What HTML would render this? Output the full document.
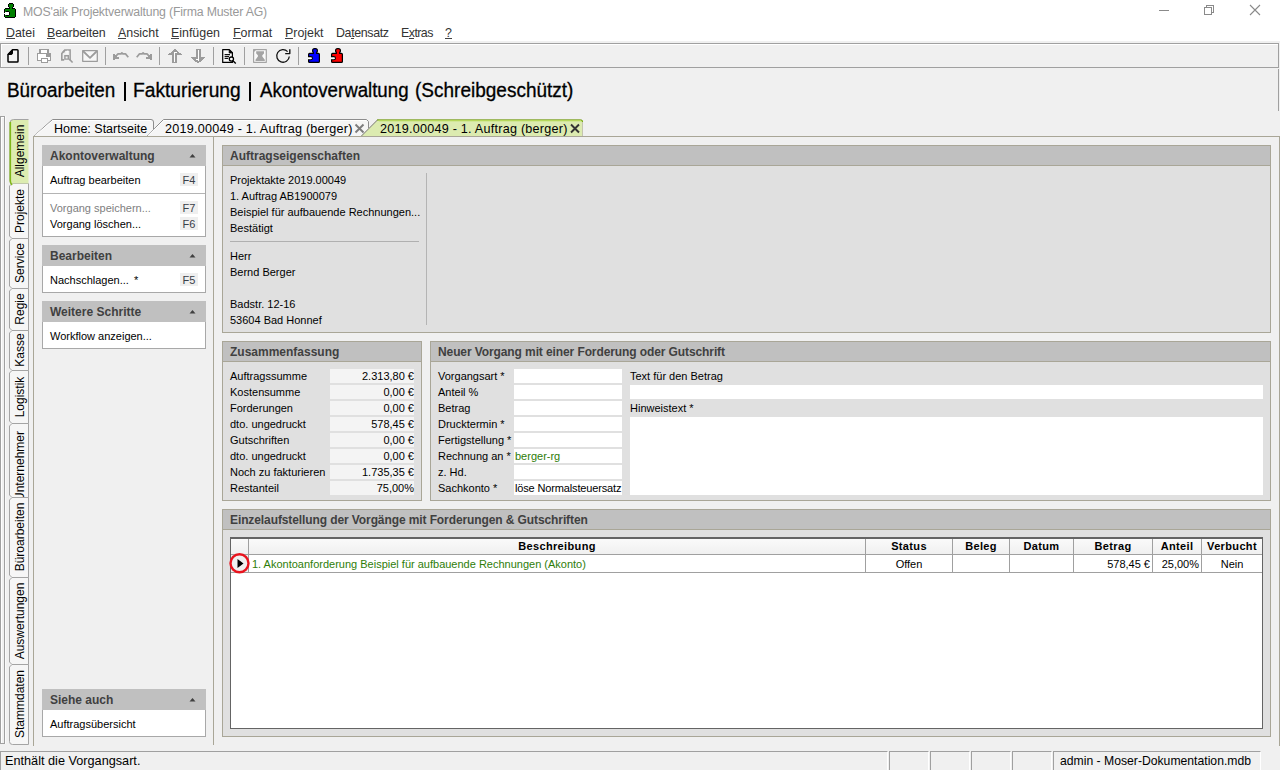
<!DOCTYPE html>
<html><head><meta charset="utf-8">
<style>
*{margin:0;padding:0;box-sizing:border-box}
html,body{width:1280px;height:770px;overflow:hidden;background:#f0f0f0;font-family:"Liberation Sans",sans-serif;color:#000}
.a{position:absolute}
.t{position:absolute;white-space:nowrap;line-height:16px;font-size:11px}
.hl{position:absolute;height:1px}
.vl{position:absolute;width:1px}
u{text-decoration:none;border-bottom:1px solid #444;display:inline-block;line-height:10px}
</style></head><body>
<!-- title + menu white area -->
<div class="a" style="left:0;top:0;width:1280px;height:41px;background:#fff"></div>
<svg class="a" style="left:0;top:0" width="20" height="20" shape-rendering="crispEdges"><rect x="9" y="3" width="4" height="1" fill="#000"/><rect x="8" y="4" width="1" height="1" fill="#000"/><rect x="9" y="4" width="4" height="1" fill="#008000"/><rect x="13" y="4" width="1" height="1" fill="#000"/><rect x="8" y="5" width="1" height="1" fill="#000"/><rect x="9" y="5" width="4" height="1" fill="#008000"/><rect x="13" y="5" width="1" height="1" fill="#000"/><rect x="8" y="6" width="1" height="1" fill="#000"/><rect x="9" y="6" width="4" height="1" fill="#008000"/><rect x="13" y="6" width="1" height="1" fill="#000"/><rect x="9" y="7" width="1" height="1" fill="#000"/><rect x="10" y="7" width="2" height="1" fill="#008000"/><rect x="12" y="7" width="1" height="1" fill="#000"/><rect x="5" y="8" width="5" height="1" fill="#000"/><rect x="10" y="8" width="2" height="1" fill="#008000"/><rect x="12" y="8" width="3" height="1" fill="#000"/><rect x="4" y="9" width="1" height="1" fill="#000"/><rect x="5" y="9" width="10" height="1" fill="#008000"/><rect x="15" y="9" width="1" height="1" fill="#000"/><rect x="4" y="10" width="1" height="1" fill="#000"/><rect x="5" y="10" width="10" height="1" fill="#008000"/><rect x="15" y="10" width="1" height="1" fill="#000"/><rect x="4" y="11" width="1" height="1" fill="#000"/><rect x="5" y="11" width="1" height="1" fill="#008000"/><rect x="6" y="11" width="3" height="1" fill="#000"/><rect x="9" y="11" width="6" height="1" fill="#008000"/><rect x="15" y="11" width="1" height="1" fill="#000"/><rect x="4" y="12" width="1" height="1" fill="#000"/><rect x="5" y="12" width="4" height="1" fill="#fff"/><rect x="9" y="12" width="1" height="1" fill="#000"/><rect x="10" y="12" width="5" height="1" fill="#008000"/><rect x="15" y="12" width="1" height="1" fill="#000"/><rect x="4" y="13" width="5" height="1" fill="#fff"/><rect x="9" y="13" width="1" height="1" fill="#000"/><rect x="10" y="13" width="5" height="1" fill="#008000"/><rect x="15" y="13" width="1" height="1" fill="#000"/><rect x="4" y="14" width="1" height="1" fill="#000"/><rect x="5" y="14" width="4" height="1" fill="#fff"/><rect x="9" y="14" width="1" height="1" fill="#000"/><rect x="10" y="14" width="5" height="1" fill="#008000"/><rect x="15" y="14" width="1" height="1" fill="#000"/><rect x="4" y="15" width="1" height="1" fill="#000"/><rect x="5" y="15" width="1" height="1" fill="#008000"/><rect x="6" y="15" width="3" height="1" fill="#000"/><rect x="9" y="15" width="6" height="1" fill="#008000"/><rect x="15" y="15" width="1" height="1" fill="#000"/><rect x="4" y="16" width="1" height="1" fill="#000"/><rect x="5" y="16" width="10" height="1" fill="#008000"/><rect x="15" y="16" width="1" height="1" fill="#000"/><rect x="5" y="17" width="10" height="1" fill="#000"/></svg>
<div class="t" style="left:23px;top:4px;font-size:12.3px;color:#999;line-height:16px;letter-spacing:-0.18px">MOS'aik Projektverwaltung (Firma Muster AG)</div>
<div class="hl" style="left:1159px;top:10px;width:10px;background:#8a8a8a"></div>
<div class="a" style="left:1206px;top:5px;width:8px;height:8px;border:1px solid #8a8a8a"></div>
<div class="a" style="left:1204px;top:7px;width:8px;height:8px;border:1px solid #8a8a8a;background:#fff"></div>
<svg class="a" style="left:1249px;top:4px" width="12" height="12"><path d="M1 1L11 11M11 1L1 11" stroke="#8a8a8a" stroke-width="1.1"/></svg>
<!-- menu -->
<div class="t" style="left:6px;top:25px;font-size:12.4px;line-height:16px;color:#333">
<span class="a" style="left:0"><u>D</u>atei</span>
<span class="a" style="left:41px;letter-spacing:-0.15px"><u>B</u>earbeiten</span>
<span class="a" style="left:112px"><u>A</u>nsicht</span>
<span class="a" style="left:165px"><u>E</u>infügen</span>
<span class="a" style="left:227px"><u>F</u>ormat</span>
<span class="a" style="left:279px"><u>P</u>rojekt</span>
<span class="a" style="left:330px;letter-spacing:-0.35px">Da<u>t</u>ensatz</span>
<span class="a" style="left:395px;letter-spacing:-0.55px">E<u>x</u>tras</span>
<span class="a" style="left:439px"><u>?</u></span>
</div>
<!-- toolbar -->
<div class="a" style="left:0;top:43px;width:1279px;height:25px;border:1px solid #a0a0a0;background:#f0f0f0;box-shadow:inset 1px 1px 0 #fff"></div>
<svg class="a" style="left:0;top:43px" width="360" height="25" viewBox="0 43 360 25">
<g fill="none" stroke-linejoin="round">
<!-- new doc -->
<path d="M8 54.5L12.5 49.8H17.2Q18 49.8 18 50.6V61.2Q18 62 17.2 62H8.8Q8 62 8 61.2Z" stroke="#000" stroke-width="1.5" fill="#f2f2f2"/>
<path d="M8 54.5L12.5 49.8V53Q12.5 54.5 11 54.5Z" fill="#000" stroke="#000" stroke-width="1"/>
<!-- separators -->
<g stroke="#a0a0a0" stroke-width="1"><path d="M28.5 47V65M105.5 47V65M159.5 47V65M213.5 47V65M244.5 47V65M298.5 47V65"/></g>
<!-- printer -->
<g shape-rendering="crispEdges">
<rect x="39" y="49" width="10" height="4" fill="#9c9c9c"/><rect x="41" y="50" width="6" height="3" fill="#fff"/>
<rect x="37" y="53" width="14" height="8" fill="#9c9c9c"/><rect x="38" y="54" width="12" height="6" fill="#fff"/>
<rect x="46" y="54" width="4" height="3" fill="#9c9c9c"/>
<rect x="41" y="58" width="7" height="5" fill="#9c9c9c"/><rect x="42" y="59" width="5" height="3" fill="#fff"/>
</g>
<!-- preview -->
<g fill="#9c9c9c">
<path d="M61 53.2L64.6 49.2H70.9V60.4H69.4V50.7H65.5L62.6 53.8V59H64.2V60.8H61Z"/>
<path d="M64.2 55.1H69V59.8H64.2ZM65.6 56.5V58.4H67.6V56.5Z" fill-rule="evenodd"/>
<path d="M68.6 59.6L69.8 58.6L73.2 62L72 63.1Z"/>
<path d="M64.6 49.2V52.6H61.6Z"/>
</g>
<path d="M67 51.2V54.2M67 51.2H68.3" stroke="#fff" stroke-width="1"/>
<!-- mail -->
<g stroke="#9c9c9c" stroke-width="1.3" fill="#f7f7f7">
<path d="M82.7 50.6H97.3V61.3H82.7Z"/>
<path d="M83 51L90 57.8L97 51" fill="none" stroke-width="1.8"/>
</g>
<!-- undo -->
<g id="undo">
<path d="M116.6 55.4L118 53.9H120.9L121.9 52.8L122.9 53.9H125.5L128.3 57.2" stroke="#9c9c9c" stroke-width="1.7" fill="none"/>
<path d="M113 54H115V55H117V57H119V59H115V60H113Z" fill="#9c9c9c"/>
</g>
<g transform="translate(265 0) scale(-1 1)">
<path d="M116.6 55.4L118 53.9H120.9L121.9 52.8L122.9 53.9H125.5L128.3 57.2" stroke="#9c9c9c" stroke-width="1.7" fill="none"/>
<path d="M113 54H115V55H117V57H119V59H115V60H113Z" fill="#9c9c9c"/>
</g>
<!-- up / down -->
<g shape-rendering="crispEdges"><rect x="174" y="49" width="2" height="1" fill="#9c9c9c"/><rect x="173" y="50" width="4" height="1" fill="#9c9c9c"/><rect x="172" y="51" width="6" height="1" fill="#9c9c9c"/><rect x="171" y="52" width="8" height="1" fill="#9c9c9c"/><rect x="169" y="53" width="12" height="1" fill="#9c9c9c"/><rect x="168" y="54" width="14" height="1" fill="#9c9c9c"/><rect x="172" y="55" width="5" height="8" fill="#9c9c9c"/><rect x="174" y="52" width="1" height="10" fill="#fff"/><rect x="174" y="52" width="3" height="1" fill="#fff"/><rect x="196" y="49" width="5" height="8" fill="#9c9c9c"/><rect x="191" y="57" width="14" height="1" fill="#9c9c9c"/><rect x="192" y="58" width="12" height="1" fill="#9c9c9c"/><rect x="193" y="59" width="10" height="1" fill="#9c9c9c"/><rect x="194" y="60" width="8" height="1" fill="#9c9c9c"/><rect x="195" y="61" width="6" height="1" fill="#9c9c9c"/><rect x="197" y="62" width="2" height="1" fill="#9c9c9c"/><rect x="198" y="50" width="1" height="11" fill="#fff"/><rect x="196" y="59" width="3" height="1" fill="#fff"/></g>
<!-- doc search -->
<path d="M222.7 49.6H229.3L232.4 52.7V62.4H222.7Z" stroke="#000" stroke-width="1.2" fill="#f8f8f8"/>
<path d="M229.2 49.8V53H232.4Z" fill="#000" stroke="#000" stroke-width="0.8"/>
<path d="M224.6 54.6H230M224.6 56.6H229M224.6 58.5H228.2" stroke="#111" stroke-width="1.2" fill="none"/>
<circle cx="231.4" cy="59.1" r="2.1" stroke="#000" stroke-width="1.3" fill="#fff"/>
<path d="M232.9 60.8L235.8 63.4" stroke="#000" stroke-width="1.4"/>
<!-- xbox -->
<path d="M253.6 49.6H266.3V62.3H253.6Z" stroke="#a4a4a4" stroke-width="1.2" fill="#fafafa"/>
<path d="M253.6 51.5L255.5 49.6" stroke="#a4a4a4" stroke-width="1.2"/>
<path d="M256.2 51.3H264V53.4L262.3 55.2V56.6L264.8 59.8V61H255.5V59.8L257.9 56.6V55.2L256.2 53.4Z" fill="#a4a4a4"/>
<!-- refresh -->
<path d="M289.3 56.5A6.3 6.3 0 1 1 287.6 51.6" stroke="#111" stroke-width="1.3" fill="none"/>
<path d="M289.8 49.2V53.6H285.2" stroke="#111" stroke-width="1.4" fill="none"/>
<!-- puzzles -->
<g transform="translate(0 0)">
<rect x="312.6" y="48.6" width="4.8" height="4.2" rx="2" fill="#0000ff" stroke="#000" stroke-width="1.2"/>
<rect x="308.6" y="53.4" width="10.8" height="9" rx="1" fill="#0000ff" stroke="#000" stroke-width="1.2"/>
<rect x="313.9" y="51.6" width="2.2" height="2.4" fill="#0000ff"/>
<rect x="307.9" y="57.1" width="3" height="2.2" fill="#fff"/><path d="M308 56.6H310.9A1.6 1.6 0 1 1 310.9 59.8H308" fill="#fff" stroke="#000" stroke-width="1.1"/>

</g>
<g transform="translate(23 0)">
<rect x="312.6" y="48.6" width="4.8" height="4.2" rx="2" fill="#ff0000" stroke="#000" stroke-width="1.2"/>
<rect x="308.6" y="53.4" width="10.8" height="9" rx="1" fill="#ff0000" stroke="#000" stroke-width="1.2"/>
<rect x="313.9" y="51.6" width="2.2" height="2.4" fill="#ff0000"/>
<rect x="307.9" y="57.1" width="3" height="2.2" fill="#fff"/><path d="M308 56.6H310.9A1.6 1.6 0 1 1 310.9 59.8H308" fill="#fff" stroke="#000" stroke-width="1.1"/>

</g>
</g>
</svg>
<!-- heading -->
<div class="t" style="left:0;top:79px;font-size:18.8px;line-height:24px;-webkit-text-stroke:0.3px #000;transform:scaleY(1.075);transform-origin:0 18px">
<span class="a" id="h1" style="left:7px;font-size:18.9px">Büroarbeiten</span><span class="a" id="h2" style="left:133px;font-size:19.2px">Fakturierung</span><span class="a" id="h3" style="left:260px;font-size:18.7px">Akontoverwaltung</span><span class="a" id="h4" style="left:415px;font-size:19px">(Schreibgeschützt)</span></div>
<div class="a" style="left:124px;top:82px;width:2px;height:19px;background:#000"></div><div class="a" style="left:249px;top:82px;width:2px;height:19px;background:#000"></div>
<div class="vl" style="left:1278px;top:69px;height:42px;background:#a0a0a0"></div>

<!-- CONTENT -->
<div id="content"></div>
<div class="a" style="left:222px;top:145px;width:1049px;height:188px;border:1px solid #a9a697;background:#e0e0e0"></div>
<div class="a" style="left:223px;top:146px;width:1047px;height:20px;background:#c0c0c0;border-bottom:1px solid #a9a697"></div>
<div class="t" style="left:230px;top:148px;font-size:12px;font-weight:bold;color:#404040;line-height:16px">Auftragseigenschaften</div>
<div class="a" style="left:222px;top:341px;width:200px;height:160px;border:1px solid #a9a697;background:#e0e0e0"></div>
<div class="a" style="left:223px;top:342px;width:198px;height:20px;background:#c0c0c0;border-bottom:1px solid #a9a697"></div>
<div class="t" style="left:230px;top:344px;font-size:12px;font-weight:bold;color:#404040;line-height:16px">Zusammenfassung</div>
<div class="a" style="left:430px;top:341px;width:841px;height:160px;border:1px solid #a9a697;background:#e0e0e0"></div>
<div class="a" style="left:431px;top:342px;width:839px;height:20px;background:#c0c0c0;border-bottom:1px solid #a9a697"></div>
<div class="t" style="left:438px;top:344px;font-size:12px;font-weight:bold;color:#404040;line-height:16px;letter-spacing:-0.1px">Neuer Vorgang mit einer Forderung oder Gutschrift</div>
<div class="a" style="left:222px;top:509px;width:1049px;height:228px;border:1px solid #a9a697;background:#e0e0e0"></div>
<div class="a" style="left:223px;top:510px;width:1047px;height:20px;background:#c0c0c0;border-bottom:1px solid #a9a697"></div>
<div class="t" style="left:230px;top:512px;font-size:12px;font-weight:bold;color:#404040;line-height:16px;letter-spacing:-0.1px">Einzelaufstellung der Vorgänge mit Forderungen &amp; Gutschriften</div>
<div class="t" style="left:230px;top:172px;">Projektakte 2019.00049</div>
<div class="t" style="left:230px;top:188px;">1. Auftrag AB1900079</div>
<div class="t" style="left:230px;top:204px;">Beispiel für aufbauende Rechnungen...</div>
<div class="t" style="left:230px;top:220px;">Bestätigt</div>
<div class="t" style="left:230px;top:248px;">Herr</div>
<div class="t" style="left:230px;top:264px;">Bernd Berger</div>
<div class="t" style="left:230px;top:296px;">Badstr. 12-16</div>
<div class="t" style="left:230px;top:312px;">53604 Bad Honnef</div>
<div class="hl" style="left:230px;top:241px;width:189px;background:#b0b0b0"></div>
<div class="vl" style="left:426px;top:173px;height:152px;background:#b4b4b4"></div>
<div class="t" style="left:230px;top:368px;">Auftragssumme</div>
<div class="a" style="left:330px;top:369px;width:84px;height:14px;background:#f4f4f4"></div>
<div class="t" style="left:330px;top:368px;width:84px;text-align:right">2.313,80 €</div>
<div class="t" style="left:230px;top:384px;">Kostensumme</div>
<div class="a" style="left:330px;top:385px;width:84px;height:14px;background:#f4f4f4"></div>
<div class="t" style="left:330px;top:384px;width:84px;text-align:right">0,00 €</div>
<div class="t" style="left:230px;top:400px;">Forderungen</div>
<div class="a" style="left:330px;top:401px;width:84px;height:14px;background:#f4f4f4"></div>
<div class="t" style="left:330px;top:400px;width:84px;text-align:right">0,00 €</div>
<div class="t" style="left:230px;top:416px;">dto. ungedruckt</div>
<div class="a" style="left:330px;top:417px;width:84px;height:14px;background:#f4f4f4"></div>
<div class="t" style="left:330px;top:416px;width:84px;text-align:right">578,45 €</div>
<div class="t" style="left:230px;top:432px;">Gutschriften</div>
<div class="a" style="left:330px;top:433px;width:84px;height:14px;background:#f4f4f4"></div>
<div class="t" style="left:330px;top:432px;width:84px;text-align:right">0,00 €</div>
<div class="t" style="left:230px;top:448px;">dto. ungedruckt</div>
<div class="a" style="left:330px;top:449px;width:84px;height:14px;background:#f4f4f4"></div>
<div class="t" style="left:330px;top:448px;width:84px;text-align:right">0,00 €</div>
<div class="t" style="left:230px;top:464px;">Noch zu fakturieren</div>
<div class="a" style="left:330px;top:465px;width:84px;height:14px;background:#f4f4f4"></div>
<div class="t" style="left:330px;top:464px;width:84px;text-align:right">1.735,35 €</div>
<div class="t" style="left:230px;top:480px;">Restanteil</div>
<div class="a" style="left:330px;top:481px;width:84px;height:14px;background:#f4f4f4"></div>
<div class="t" style="left:330px;top:480px;width:84px;text-align:right">75,00%</div>
<div class="t" style="left:438px;top:368px;">Vorgangsart *</div>
<div class="a" style="left:514px;top:369px;width:108px;height:14px;background:#fff"></div>
<div class="t" style="left:438px;top:384px;">Anteil %</div>
<div class="a" style="left:514px;top:385px;width:108px;height:14px;background:#fff"></div>
<div class="t" style="left:438px;top:400px;">Betrag</div>
<div class="a" style="left:514px;top:401px;width:108px;height:14px;background:#fff"></div>
<div class="t" style="left:438px;top:416px;">Drucktermin *</div>
<div class="a" style="left:514px;top:417px;width:108px;height:14px;background:#fff"></div>
<div class="t" style="left:438px;top:432px;">Fertigstellung *</div>
<div class="a" style="left:514px;top:433px;width:108px;height:14px;background:#fff"></div>
<div class="t" style="left:438px;top:448px;">Rechnung an *</div>
<div class="a" style="left:514px;top:449px;width:108px;height:14px;background:#fff"></div>
<div class="t" style="left:438px;top:464px;">z. Hd.</div>
<div class="a" style="left:514px;top:465px;width:108px;height:14px;background:#fff"></div>
<div class="t" style="left:438px;top:480px;">Sachkonto *</div>
<div class="a" style="left:514px;top:481px;width:108px;height:14px;background:#fff"></div>
<div class="t" style="left:515px;top:448px;color:#2e7d08">berger-rg</div>
<div class="t" style="left:515px;top:480px;letter-spacing:-0.15px">löse Normalsteuersatz</div>
<div class="t" style="left:630px;top:368px;">Text für den Betrag</div>
<div class="a" style="left:630px;top:385px;width:633px;height:14px;background:#fff"></div>
<div class="t" style="left:630px;top:400px;">Hinweistext *</div>
<div class="a" style="left:630px;top:417px;width:633px;height:78px;background:#fff"></div>
<div class="a" style="left:230px;top:537px;width:1033px;height:192px;background:#fff;border:1px solid #646464;border-top:2px solid #646464"></div>
<div class="a" style="left:231px;top:539px;width:1031px;height:15px;background:linear-gradient(#fafafa,#f0f0f0)"></div>
<div class="hl" style="left:231px;top:554px;width:1031px;background:#a0a0a0"></div>
<div class="hl" style="left:231px;top:572px;width:1031px;background:#a0a0a0"></div>
<div class="a" style="left:231px;top:555px;width:17px;height:17px;background:#f0f0f0"></div>
<div class="vl" style="left:248px;top:539px;height:33px;background:#a0a0a0"></div>
<div class="vl" style="left:865px;top:539px;height:33px;background:#a0a0a0"></div>
<div class="vl" style="left:952px;top:539px;height:33px;background:#a0a0a0"></div>
<div class="vl" style="left:1009px;top:539px;height:33px;background:#a0a0a0"></div>
<div class="vl" style="left:1073px;top:539px;height:33px;background:#a0a0a0"></div>
<div class="vl" style="left:1152px;top:539px;height:33px;background:#a0a0a0"></div>
<div class="vl" style="left:1201px;top:539px;height:33px;background:#a0a0a0"></div>
<div class="t" style="left:249px;top:538px;width:616px;text-align:center;font-weight:bold;letter-spacing:0.35px">Beschreibung</div>
<div class="t" style="left:866px;top:538px;width:86px;text-align:center;font-weight:bold;letter-spacing:0.35px">Status</div>
<div class="t" style="left:953px;top:538px;width:56px;text-align:center;font-weight:bold;letter-spacing:0.35px">Beleg</div>
<div class="t" style="left:1010px;top:538px;width:63px;text-align:center;font-weight:bold;letter-spacing:0.35px">Datum</div>
<div class="t" style="left:1074px;top:538px;width:78px;text-align:center;font-weight:bold;letter-spacing:0.35px">Betrag</div>
<div class="t" style="left:1153px;top:538px;width:48px;text-align:center;font-weight:bold;letter-spacing:0.35px">Anteil</div>
<div class="t" style="left:1202px;top:538px;width:60px;text-align:center;font-weight:bold;letter-spacing:0.35px">Verbucht</div>
<div class="t" style="left:252px;top:556px;color:#2e7d08">1. Akontoanforderung Beispiel für aufbauende Rechnungen (Akonto)</div>
<div class="t" style="left:866px;top:556px;width:86px;text-align:center">Offen</div>
<div class="t" style="left:1074px;top:556px;width:76px;text-align:right">578,45 €</div>
<div class="t" style="left:1153px;top:556px;width:46px;text-align:right">25,00%</div>
<div class="t" style="left:1202px;top:556px;width:60px;text-align:center">Nein</div>
<svg class="a" style="left:228px;top:552px" width="24" height="22"><path d="M9.5 7V16L15.5 11.5Z" fill="#000"/><circle cx="11.5" cy="11.2" r="9" fill="none" stroke="#e8141e" stroke-width="2.4"/></svg>
<svg class="a" style="left:30px;top:116px" width="560" height="22" viewBox="30 116 560 22">
<path d="M33.5 136.5L52.5 119.5H151Q153.5 119.5 153.5 122V136.5" fill="#f5f5f5" stroke="#8c8c8c" stroke-width="1"/>
<path d="M34.5 136L52.8 120.5H151" fill="none" stroke="#fff" stroke-width="1"/>
<path d="M146.5 136.5L163.5 119.5H366.5L368.5 121.5V136.5" fill="#f5f5f5" stroke="#8c8c8c" stroke-width="1"/>
<path d="M147.5 136L163.8 120.5H366" fill="none" stroke="#fff" stroke-width="1"/>
<path d="M360.5 136.5L377.5 119.5H580.5Q582.5 119.5 582.5 121.5V136.5" fill="#dcebb0" stroke="#c4c4b0" stroke-width="1"/>
<path d="M361 136.5L378 119.5" fill="none" stroke="#8c8c8c" stroke-width="1"/><path d="M377 120H580.5Q582.5 120 582.5 122" fill="none" stroke="#7aae10" stroke-width="1.2"/>
<path d="M379 120.8H581" stroke="#b9dc5a" stroke-width="1"/>
<path d="M33 136.5H1279" stroke="#a9a697" stroke-width="1"/>
<path d="M355.5 124.5L363.5 132.5M363.5 124.5L355.5 132.5" stroke="#7c7c7c" stroke-width="1.9"/>
<path d="M571 124.5L579 132.5M579 124.5L571 132.5" stroke="#333" stroke-width="1.9"/>
</svg>
<div class="t" style="left:54px;top:121px;font-size:12.5px;line-height:16px">Home: Startseite</div>
<div class="t" style="left:165px;top:121px;font-size:12.6px;letter-spacing:0.24px;line-height:16px">2019.00049 - 1. Auftrag (berger)</div>
<div class="t" style="left:380px;top:121px;font-size:12.6px;letter-spacing:0.24px;line-height:16px">2019.00049 - 1. Auftrag (berger)</div>
<div class="vl" style="left:213px;top:137px;height:608px;background:#a9a697"></div>
<div class="a" style="left:42px;top:145px;width:164px;height:21px;background:#c0c0c0"></div>
<div class="t" style="left:50px;top:148px;font-size:12px;font-weight:bold;color:#404040;line-height:16px">Akontoverwaltung</div>
<svg class="a" style="left:189px;top:153px" width="7" height="5"><path d="M0.5 4.5L3.5 1L6.5 4.5Z" fill="#404040"/></svg>
<div class="a" style="left:42px;top:166px;width:164px;height:71px;background:#fff;border:1px solid #a8a8a8;border-top:none"></div>
<div class="a" style="left:42px;top:245px;width:164px;height:21px;background:#c0c0c0"></div>
<div class="t" style="left:50px;top:248px;font-size:12px;font-weight:bold;color:#404040;line-height:16px">Bearbeiten</div>
<svg class="a" style="left:189px;top:253px" width="7" height="5"><path d="M0.5 4.5L3.5 1L6.5 4.5Z" fill="#404040"/></svg>
<div class="a" style="left:42px;top:266px;width:164px;height:27px;background:#fff;border:1px solid #a8a8a8;border-top:none"></div>
<div class="a" style="left:42px;top:301px;width:164px;height:21px;background:#c0c0c0"></div>
<div class="t" style="left:50px;top:304px;font-size:12px;font-weight:bold;color:#404040;line-height:16px">Weitere Schritte</div>
<svg class="a" style="left:189px;top:309px" width="7" height="5"><path d="M0.5 4.5L3.5 1L6.5 4.5Z" fill="#404040"/></svg>
<div class="a" style="left:42px;top:322px;width:164px;height:27px;background:#fff;border:1px solid #a8a8a8;border-top:none"></div>
<div class="a" style="left:42px;top:689px;width:164px;height:21px;background:#c0c0c0"></div>
<div class="t" style="left:50px;top:692px;font-size:12px;font-weight:bold;color:#404040;line-height:16px">Siehe auch</div>
<svg class="a" style="left:189px;top:697px" width="7" height="5"><path d="M0.5 4.5L3.5 1L6.5 4.5Z" fill="#404040"/></svg>
<div class="a" style="left:42px;top:710px;width:164px;height:27px;background:#fff;border:1px solid #a8a8a8;border-top:none"></div>
<div class="hl" style="left:43px;top:193px;width:162px;background:#b4b4b4"></div>
<div class="t" style="left:50px;top:172px;color:#000">Auftrag bearbeiten</div>
<div class="a" style="left:180px;top:173px;width:18px;height:13px;background:#efefef"></div>
<div class="t" style="left:181px;top:172px;width:16px;text-align:center;color:#3a4048">F4</div>
<div class="t" style="left:50px;top:200px;color:#808080">Vorgang speichern...</div>
<div class="a" style="left:180px;top:201px;width:18px;height:13px;background:#efefef"></div>
<div class="t" style="left:181px;top:200px;width:16px;text-align:center;color:#3a4048">F7</div>
<div class="t" style="left:50px;top:216px;color:#000">Vorgang löschen...</div>
<div class="a" style="left:180px;top:217px;width:18px;height:13px;background:#efefef"></div>
<div class="t" style="left:181px;top:216px;width:16px;text-align:center;color:#3a4048">F6</div>
<div class="t" style="left:50px;top:272px;color:#000">Nachschlagen...</div><div class="t" style="left:134px;top:272px">*</div>
<div class="a" style="left:180px;top:273px;width:18px;height:13px;background:#efefef"></div>
<div class="t" style="left:181px;top:272px;width:16px;text-align:center;color:#3a4048">F5</div>
<div class="t" style="left:50px;top:328px;color:#000">Workflow anzeigen...</div>
<div class="t" style="left:50px;top:716px;color:#000">Auftragsübersicht</div>
<div class="a" style="left:0;top:116px;width:5px;height:628px;border:1px solid #a0a0a0;box-shadow:inset 1px 1px 0 #fff"></div><div class="vl" style="left:5px;top:116px;height:628px;background:#fafafa"></div>

<div class="a" style="left:33px;top:136px;width:1247px;height:610px;border-left:1px solid #a9a697;border-top:1px solid #a9a697;border-right:1px solid #a9a697"></div>
<svg class="a" style="left:0;top:0" width="32" height="750"><path d="M28.5 183.5H12L9.5 186.0V236.0L12 238.5H28.5Z" fill="#f6f6f6" stroke="#a4a4a4" stroke-width="1"/><path d="M28.5 238.5H12L9.5 241.0V286.0L12 288.5H28.5Z" fill="#f6f6f6" stroke="#a4a4a4" stroke-width="1"/><path d="M28.5 288.5H12L9.5 291.0V328.0L12 330.5H28.5Z" fill="#f6f6f6" stroke="#a4a4a4" stroke-width="1"/><path d="M28.5 330.5H12L9.5 333.0V368.0L12 370.5H28.5Z" fill="#f6f6f6" stroke="#a4a4a4" stroke-width="1"/><path d="M28.5 370.5H12L9.5 373.0V421.0L12 423.5H28.5Z" fill="#f6f6f6" stroke="#a4a4a4" stroke-width="1"/><path d="M28.5 423.5H12L9.5 426.0V495.0L12 497.5H28.5Z" fill="#f6f6f6" stroke="#a4a4a4" stroke-width="1"/><path d="M28.5 497.5H12L9.5 500.0V575.0L12 577.5H28.5Z" fill="#f6f6f6" stroke="#a4a4a4" stroke-width="1"/><path d="M28.5 577.5H12L9.5 580.0V662.0L12 664.5H28.5Z" fill="#f6f6f6" stroke="#a4a4a4" stroke-width="1"/><path d="M28.5 664.5H12L9.5 667.0V741.5Q9.5 744.5 12.5 744.5H28.5Z" fill="#f6f6f6" stroke="#a4a4a4" stroke-width="1"/><path d="M28.5 119.5H13Q9.5 119.5 9.5 123V180Q9.5 183.5 12 185.5V183.5H28.5Z" fill="#dcecb0" stroke="none"/><path d="M28.5 119.5H13.5Q10 119.5 10 123V180.5Q10 183 12 185" fill="none" stroke="#a4a4a4" stroke-width="1"/><path d="M10.3 122V181Q10.3 183 12 185" fill="none" stroke="#80b818" stroke-width="1.6"/></svg>
<div class="t" style="left:-30px;top:143.0px;width:100px;text-align:center;font-size:12px;line-height:16px;transform:rotate(-90deg)">Allgemein</div>
<div class="t" style="left:-30px;top:202.5px;width:100px;text-align:center;font-size:12px;line-height:16px;transform:rotate(-90deg)">Projekte</div>
<div class="t" style="left:-30px;top:255.0px;width:100px;text-align:center;font-size:12px;line-height:16px;transform:rotate(-90deg)">Service</div>
<div class="t" style="left:-30px;top:301.0px;width:100px;text-align:center;font-size:12px;line-height:16px;transform:rotate(-90deg)">Regie</div>
<div class="t" style="left:-30px;top:342.0px;width:100px;text-align:center;font-size:12px;line-height:16px;transform:rotate(-90deg)">Kasse</div>
<div class="t" style="left:-30px;top:388.5px;width:100px;text-align:center;font-size:12px;line-height:16px;transform:rotate(-90deg)">Logistik</div>
<div class="a" style="left:0;top:424px;width:30px;height:73px;overflow:hidden"><div class="t" style="left:-30px;top:34px;width:100px;text-align:center;font-size:12px;line-height:16px;transform:rotate(-90deg)">Unternehmer</div></div>
<div class="t" style="left:-30px;top:529.0px;width:100px;text-align:center;font-size:12px;line-height:16px;transform:rotate(-90deg)">Büroarbeiten</div>
<div class="t" style="left:-30px;top:612.5px;width:100px;text-align:center;font-size:12px;line-height:16px;transform:rotate(-90deg)">Auswertungen</div>
<div class="t" style="left:-30px;top:696.0px;width:100px;text-align:center;font-size:12px;line-height:16px;transform:rotate(-90deg)">Stammdaten</div>

<!-- status bar -->

<div class="a" style="left:0;top:751px;width:888px;height:19px;border-left:1px solid #a0a0a0;border-top:1px solid #a0a0a0;border-right:1px solid #fff"></div>
<div class="t" style="left:5px;top:753px;font-size:12.7px;line-height:17px">Enthält die Vorgangsart.</div>
<div class="a" style="left:889px;top:751px;width:40px;height:19px;border-left:1px solid #a0a0a0;border-top:1px solid #a0a0a0;border-right:1px solid #fff"></div>
<div class="a" style="left:930px;top:751px;width:40px;height:19px;border-left:1px solid #a0a0a0;border-top:1px solid #a0a0a0;border-right:1px solid #fff"></div>
<div class="a" style="left:971px;top:751px;width:40px;height:19px;border-left:1px solid #a0a0a0;border-top:1px solid #a0a0a0;border-right:1px solid #fff"></div>
<div class="a" style="left:1012px;top:751px;width:40px;height:19px;border-left:1px solid #a0a0a0;border-top:1px solid #a0a0a0;border-right:1px solid #fff"></div>
<div class="a" style="left:1053px;top:751px;width:208px;height:19px;border-left:1px solid #a0a0a0;border-top:1px solid #a0a0a0;border-right:1px solid #fff"></div>
<div class="t" style="left:1060px;top:753px;font-size:12.2px;line-height:17px">admin - Moser-Dokumentation.mdb</div>
</body></html>
